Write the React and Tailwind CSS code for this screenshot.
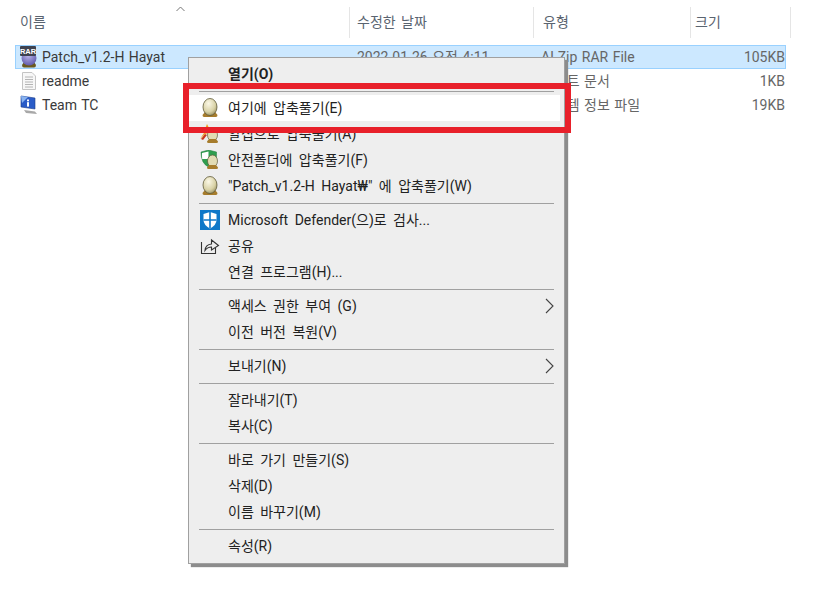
import React from 'react';

const font = { fontFamily: 'Roboto, "Noto Sans CJK KR", sans-serif' };

const EggIcon = () => (
    <svg width="18" height="20" viewBox="0 0 18 20">
        <defs>
            <radialGradient id="egg" cx="0.4" cy="0.3" r="0.8">
                <stop offset="0" stopColor="#fbf8e6" />
                <stop offset="0.6" stopColor="#d9d2a6" />
                <stop offset="1" stopColor="#8d8454" />
            </radialGradient>
        </defs>
        <path d="M1.5 17 L4 14 H14 L16.5 17 Q16.5 19 15 19 H3 Q1.5 19 1.5 17Z" fill="#a67c2c" />
        <ellipse cx="9" cy="9" rx="7" ry="8.5" fill="url(#egg)" stroke="#5f5a3a" strokeWidth="0.8" />
    </svg>
);

const ZipStarIcon = () => (
    <svg width="20" height="20" viewBox="0 0 20 20">
        <path d="M0 15 L4 9 L1 5 H5 L7 0 L9 4 H13 L9 9 L5 10Z" fill="#f0a020" />
        <path d="M1 15 L5 10 L7 11 L3 16Z" fill="#c8381c" />
        <ellipse cx="12.5" cy="11" rx="5" ry="6" fill="#e2dcb4" stroke="#5f5a3a" strokeWidth="0.7" />
        <path d="M7 17.5 L9 15 H16 L18 17.5 Q18 19 16.5 19 H8.5 Q7 19 7 17.5Z" fill="#a67c2c" />
    </svg>
);

const SafeIcon = () => (
    <svg width="20" height="20" viewBox="0 0 20 20">
        <path d="M8.5 0 L16.5 2 Q17 10 14 13.5 L8.5 17 Q1 13.5 1 2Z" fill="#2f9e4f" stroke="#1f7a3a" strokeWidth="0.5" />
        <path d="M8.5 1.5 V9 H2.2 Q1.9 6 2 3Z" fill="#ffffff" />
        <ellipse cx="12.5" cy="11" rx="5" ry="6" fill="#e2dcb4" stroke="#5f5a3a" strokeWidth="0.7" />
        <path d="M7 17.5 L9 15 H16 L18 17.5 Q18 19 16.5 19 H8.5 Q7 19 7 17.5Z" fill="#a67c2c" />
    </svg>
);

const DefenderIcon = () => (
    <svg width="20" height="20" viewBox="0 0 20 20">
        <rect width="20" height="20" fill="#0f78c8" />
        <path d="M10 2 L16.5 4 V10 Q16.5 15 10 18.5 Q3.5 15 3.5 10 V4Z" fill="#ffffff" />
        <path d="M9.2 2 H10.8 V18 H9.2Z M3.5 9.2 H16.5 V10.8 H3.5Z" fill="#0f78c8" />
    </svg>
);

const ShareIcon = () => (
    <svg width="20" height="18" viewBox="0 0 20 18" fill="none" stroke="#333333" strokeWidth="1.1">
        <path d="M1.5 5 V16.5 H15.5 V11" />
        <path d="M5 13.5 Q5.5 7.5 11.5 7 V3 L18.5 8.5 L11.5 13 V10 Q7.5 10 5 13.5Z" />
    </svg>
);

const RarIcon = () => (
    <svg width="20" height="22" viewBox="0 0 20 22">
        <defs>
            <radialGradient id="ball" cx="0.45" cy="0.35" r="0.7">
                <stop offset="0" stopColor="#b9b4e8" />
                <stop offset="1" stopColor="#5b55a8" />
            </radialGradient>
        </defs>
        <path d="M3 19 L5 16 H15 L17 19 Q17 21.5 15 21.5 H5 Q3 21.5 3 19Z" fill="#6b5a20" />
        <circle cx="10" cy="12" r="7.5" fill="url(#ball)" />
        <rect x="1" y="0" width="16" height="10" rx="1" fill="#3f4350" />
        <text x="9" y="8" fontSize="7.5" fontWeight="700" textAnchor="middle" fill="#ffffff" fontFamily="Liberation Sans, sans-serif">RAR</text>
    </svg>
);

const TextFileIcon = () => (
    <svg width="14" height="18" viewBox="0 0 14 18">
        <path d="M0.5 0.5 H10 L13.5 4 V17.5 H0.5Z" fill="#f7f7f7" stroke="#c4c4c4" />
        <path d="M3 5 H11 M3 7.5 H11 M3 10 H11 M3 12.5 H11 M3 15 H11" stroke="#b4b4b4" />
    </svg>
);

const SysInfoIcon = () => (
    <svg width="18" height="20" viewBox="0 0 18 20">
        <path d="M1 1 L15 3 V14 L1 12Z" fill="#2a5cc8" stroke="#1c3c88" strokeWidth="0.6" />
        <path d="M1 1 L8 2 L2 8Z" fill="#8ab4f0" />
        <rect x="7" y="4.5" width="2" height="1.8" fill="#ffffff" />
        <rect x="7" y="7.2" width="2" height="4.4" fill="#ffffff" />
        <path d="M4 15 L15 16.5 L17 19 L6 18Z" fill="#a8a8a8" />
    </svg>
);

const columns = [
    { label: '이름', width: 'w-[350px]', pad: 'pl-[20px]' },
    { label: '수정한 날짜', width: 'w-[184px]', pad: 'pl-[7px]' },
    { label: '유형', width: 'w-[157px]', pad: 'pl-[9px]' },
    { label: '크기', width: 'w-[100px]', pad: 'pl-[4px]' },
];

const files = [
    { name: 'Patch_v1.2-H Hayat', date: '2022-01-26 오전 4:11', type: 'ALZip RAR File', size: '105KB', icon: <RarIcon />, selected: true },
    { name: 'readme', date: '2022-01-26 오전 4:11', type: '텍스트 문서', size: '1KB', icon: <TextFileIcon /> },
    { name: 'Team TC', date: '2022-01-26 오전 4:11', type: '시스템 정보 파일', size: '19KB', icon: <SysInfoIcon /> },
];

const menuGroups = [
    [
        { label: '열기(O)', bold: true },
    ],
    [
        { label: '여기에 압축풀기(E)', icon: <EggIcon />, active: true },
        { label: '알집으로 압축풀기(A)', icon: <ZipStarIcon /> },
        { label: '안전폴더에 압축풀기(F)', icon: <SafeIcon /> },
        { label: '"Patch_v1.2-H Hayat₩" 에 압축풀기(W)', icon: <EggIcon /> },
    ],
    [
        { label: 'Microsoft Defender(으)로 검사...', icon: <DefenderIcon /> },
        { label: '공유', icon: <ShareIcon /> },
        { label: '연결 프로그램(H)...' },
    ],
    [
        { label: '액세스 권한 부여 (G)', arrow: true },
        { label: '이전 버전 복원(V)' },
    ],
    [
        { label: '보내기(N)', arrow: true },
    ],
    [
        { label: '잘라내기(T)' },
        { label: '복사(C)' },
    ],
    [
        { label: '바로 가기 만들기(S)' },
        { label: '삭제(D)' },
        { label: '이름 바꾸기(M)' },
    ],
    [
        { label: '속성(R)' },
    ],
];

const MenuRow = ({ item }) => (
    <div className={`flex items-center h-[26px] mr-[4px] text-[14px] [word-spacing:3px] text-[#222222] ${item.active ? 'bg-white' : ''} ${item.bold ? 'font-bold' : ''}`}>
        <span className="w-[39px] flex justify-center shrink-0 pl-[2px]">{item.icon}</span>
        <span className="flex-1 whitespace-nowrap pt-[1px]">{item.label}</span>
        {item.arrow && (
            <svg className="mr-[6px]" width="9" height="16" viewBox="0 0 9 16" fill="none" stroke="#444444" strokeWidth="1.1">
                <path d="M1 1 L8 8 L1 15" />
            </svg>
        )}
    </div>
);

const App = () => {
    return (
        <div className="relative w-[827px] h-[590px] overflow-hidden bg-white" style={font}>
            {/* column headers */}
            <div className="flex h-[31px] mt-[7px]">
                {columns.map((col) => (
                    <div key={col.label} className={`${col.width} ${col.pad} flex items-center text-[14px] [word-spacing:2px] text-[#5a6470] border-r border-[#e5e5e5]`}>
                        {col.label}
                    </div>
                ))}
            </div>
            <svg className="absolute left-[176px] top-[6px]" width="9" height="6" viewBox="0 0 9 6" fill="none" stroke="#777777">
                <path d="M0.5 5 L4.5 1 L8.5 5" />
            </svg>

            {/* file rows */}
            <div className="mt-[7px] ml-[15px] w-[771px]">
                {files.map((file) => (
                    <div
                        key={file.name}
                        className={`flex items-center h-[24px] text-[14px] [word-spacing:1px] text-[#3a3a3a] border ${file.selected ? 'bg-[#cce8ff] border-[#99d1ff]' : 'border-transparent'}`}
                    >
                        <span className="w-[26px] flex justify-center shrink-0">{file.icon}</span>
                        <span className="w-[315px] whitespace-nowrap pt-[1px]">{file.name}</span>
                        <span className="w-[184px] whitespace-nowrap pt-[1px] text-[#666666]">{file.date}</span>
                        <span className="w-[140px] whitespace-nowrap pt-[1px] text-[#666666]">{file.type}</span>
                        <span className="flex-1 text-right pt-[1px] text-[#666666]">{file.size}</span>
                    </div>
                ))}
            </div>

            {/* context menu */}
            <div className="absolute left-[188px] top-[57px] w-[377px] h-[507px] bg-[#eeeeee] border border-[#a0a0a0] shadow-[3px_3px_1px_#8c8c8c] pt-[3px]">
                {menuGroups.map((group, i) => (
                    <div key={i}>
                        {i > 0 && <div className="h-px bg-[#a0a0a0] mt-[4px] mb-[3px] mx-[10px]" />}
                        {group.map((item) => (
                            <MenuRow key={item.label} item={item} />
                        ))}
                    </div>
                ))}
            </div>

            {/* red highlight box */}
            <div className="absolute left-[183px] top-[83px] w-[388px] h-[50px] border-[6px] border-[#e8202a]" />
        </div>
    );
};

export default App;
